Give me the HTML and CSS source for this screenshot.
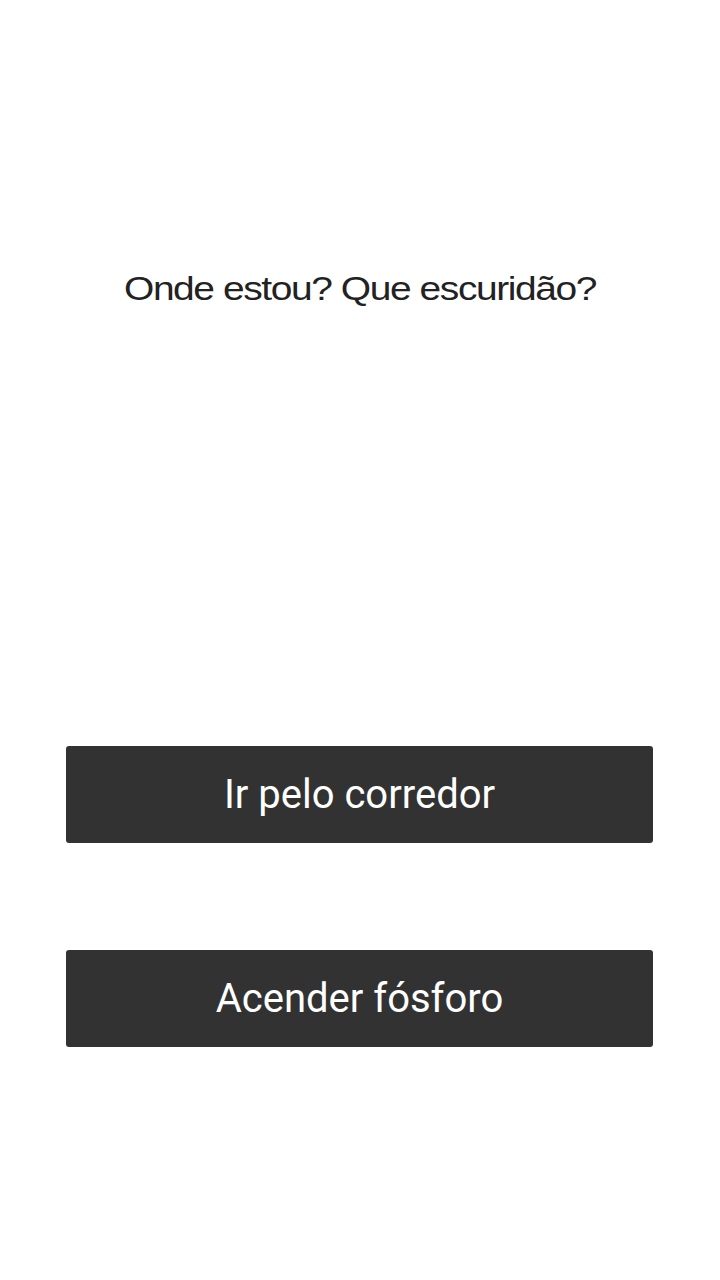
FILE: index.html
```html
<!DOCTYPE html>
<html lang="pt">
<head>
<meta charset="utf-8">
<link rel="stylesheet" href="styles.css">
</head>
<body>
<main class="screen">
  <h1 class="title"><span class="title-text">Onde estou? Que escuridão?</span></h1>
  <div class="choices">
    <button class="choice">Ir pelo corredor</button>
    <button class="choice">Acender fósforo</button>
  </div>
</main>
</body>
</html>
```
FILE: styles.css
```css
html, body {
  margin: 0;
  padding: 0;
  background: #ffffff;
}
.screen {
  width: 720px;
  height: 1280px;
  display: flex;
  flex-direction: column;
  align-items: stretch;
}
.title {
  margin: 269px 0 0 0;
  font-family: "Liberation Sans", Arial, sans-serif;
  font-weight: normal;
  font-size: 33px;
  line-height: 40px;
  color: #222222;
  text-align: center;
}
.title-text {
  display: inline-block;
  letter-spacing: -1.2px;
  transform: scaleX(1.18);
  transform-origin: center;
  white-space: nowrap;
}
.choices {
  margin-top: 437px;
  padding: 0 67px 0 66px;
  display: flex;
  flex-direction: column;
  gap: 107px;
}
.choice {
  height: 97px;
  border: none;
  border-radius: 3px;
  background: #323232;
  color: #ffffff;
  font-family: Roboto, "Liberation Sans", sans-serif;
  font-size: 40px;
  padding: 0;
  cursor: pointer;
}
```
